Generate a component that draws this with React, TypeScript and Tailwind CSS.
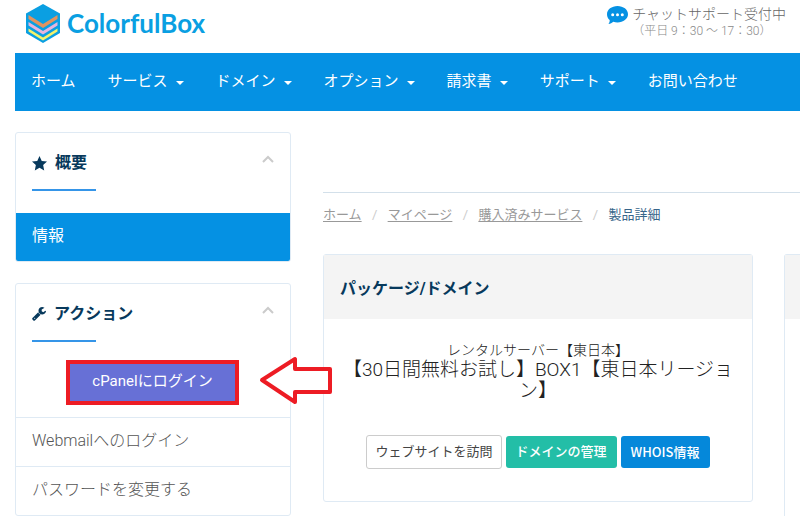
import React from "react";

const navItems = [
  { label: "ホーム", menu: false },
  { label: "サービス", menu: true },
  { label: "ドメイン", menu: true },
  { label: "オプション", menu: true },
  { label: "請求書", menu: true },
  { label: "サポート", menu: true },
  { label: "お問い合わせ", menu: false },
];

const crumbs = ["ホーム", "マイページ", "購入済みサービス"];

function LogoMark() {
  return (
    <svg viewBox="0 0 34 39" className="h-[39px] w-[34px]" aria-hidden="true">
      <path d="M17 0 34 9.500V29L17 39 0 29V9.500Z" fill="#0a9fe2" />
      <path d="M2.500 11 17 20 31.500 11V15L17 24 2.500 15Z" fill="#e2935f" />
      <path d="M2.500 18 17 27 31.500 18V21.500L17 30.500 2.500 21.500Z" fill="#e6b5dd" />
      <path d="M2.500 24.500 17 33.500 31.500 24.500V27.500L17 36.500 2.500 27.500Z" fill="#f4f36a" />
    </svg>
  );
}

function ChatIcon() {
  return (
    <svg viewBox="0 0 21 18" className="mt-1.5 h-[18px] w-[21px]" aria-hidden="true">
      <path d="M10.500 0C16.300 0 21 3.600 21 8.200s-4.700 8.200-10.500 8.200c-1.500 0-2.900-.2-4.200-.7C5 16.900 3.400 17.700 1.500 18c.8-1.100 1.300-2.300 1.200-3.900C1 12.600 0 10.500 0 8.200 0 3.600 4.700 0 10.500 0Z" fill="#0591e3" />
      <circle cx="5.700" cy="8.700" r="1.500" fill="#fff" />
      <circle cx="10.500" cy="8.700" r="1.500" fill="#fff" />
      <circle cx="15.300" cy="8.700" r="1.500" fill="#fff" />
    </svg>
  );
}

function StarIcon() {
  return (
    <svg viewBox="0 0 14 14" className="size-[15px]" fill="#07395c" aria-hidden="true">
      <path d="m7 0 2.100 4.600 4.900.5-3.600 3.400 1 5L7 11l-4.400 2.500 1-5L0 5.100l4.900-.5Z" />
    </svg>
  );
}

function WrenchIcon() {
  return (
    <svg viewBox="0 0 1664 1664" className="size-3.5" fill="#07395c" aria-hidden="true">
      <path d="M384 1344q0-26-19-45t-45-19-45 19-19 45 19 45 45 19 45-19 19-45zm644-420-682 682q-37 37-90 37-52 0-91-37L59 1498q-38-36-38-90 0-53 38-91l681-681q39 98 114.500 173.500T1028 924zm634-435q0 39-23 106-47 134-164.500 217.500T1216 896q-185 0-316.500-131.500T768 448t131.500-316.500T1216 0q58 0 121.500 16.500T1445 63q16 11 16 28t-16 28l-293 169v224l193 107q5-3 79-48.500t135.500-81T1630 454q15 0 23.500 10t8.500 25z" />
    </svg>
  );
}

function PanelHeader({ icon, title }: { icon: React.ReactNode; title: string }) {
  return (
    <div className="px-4 pt-4">
      <div className="flex h-7 items-center">
        {icon}
        <h2 className="ml-2 text-base font-bold text-[#07395c]">{title}</h2>
        <button type="button" aria-label={`${title}を閉じる`} className="ml-auto pb-2">
          <svg viewBox="0 0 12 8" className="h-2 w-3" fill="none" stroke="#cbcbcb" strokeWidth="2" aria-hidden="true">
            <path d="m1 7 5-5 5 5" />
          </svg>
        </button>
      </div>
      <div className="mt-3 h-0.5 w-16 bg-[#3595e8]" />
    </div>
  );
}

export default function App() {
  return (
    <div className="min-h-screen overflow-hidden bg-white font-['Roboto','Noto_Sans_CJK_JP',sans-serif]">
      <header className="flex h-[53px] items-start pl-[26px] pr-[14px]">
        <a href="#" className="flex items-center gap-[7px] pt-[3px] text-[#0a9fe2]">
          <LogoMark />
          <span className="font-['Lato',sans-serif] text-[26px] leading-10 font-bold">ColorfulBox</span>
        </a>
        <div className="ml-auto flex gap-1">
          <ChatIcon />
          <div className="pt-1.5 whitespace-nowrap">
            <p className="text-sm leading-4 font-light text-[#666]">チャットサポート受付中</p>
            <p className="text-xs leading-[18px] font-light text-[#888]">（平日 9：30 ～ 17：30）</p>
          </div>
        </div>
      </header>

      <nav className="ml-[15px] flex h-[58px] items-center gap-8 bg-[#0591e3] px-4 text-[15px] whitespace-nowrap text-white">
        {navItems.map((item) => (
          <a key={item.label} href="#" className="flex items-center gap-2 pb-0.5">
            {item.label}
            {item.menu && (
              <svg viewBox="0 0 8 4" className="mt-1 h-1 w-2" fill="currentColor" aria-hidden="true">
                <path d="M0 0h8L4 4Z" />
              </svg>
            )}
          </a>
        ))}
      </nav>

      <div className="flex gap-8 pt-[21px] pl-[15px]">
        <aside className="w-[276px] shrink-0">
          <section className="overflow-hidden rounded-[3px] border border-[#dfeaf4]">
            <PanelHeader icon={<StarIcon />} title="概要" />
            <a href="#" className="mt-[22px] flex h-12 items-center bg-[#0591e3] px-4 pb-0.5 text-base text-white">情報</a>
          </section>

          <section className="mt-[21px] rounded-[3px] border border-[#dfeaf4]">
            <PanelHeader icon={<WrenchIcon />} title="アクション" />
            <div className="relative mt-[18px] pl-[50px]">
              <button type="button" className="h-[45px] w-[173px] border-4 border-[#ed1c24] bg-[#6770d6] pb-0.5 text-[15px] text-white">
                cPanelにログイン
              </button>
              <svg viewBox="0 0 74 50" className="absolute -top-1 left-[243px] h-[50px] w-[74px]" aria-hidden="true">
                <path d="M3 24 36 3V13H71V36H36V46Z" fill="#fff" stroke="#ed1c24" strokeWidth="4" strokeLinejoin="round" />
              </svg>
            </div>
            <a href="#" className="mt-3 flex h-[49px] items-center border-t border-[#dfeaf4] px-4 pb-0.5 text-base font-light text-[#555]">Webmailへのログイン</a>
            <a href="#" className="flex h-[49px] items-center border-t border-[#dfeaf4] px-4 pb-0.5 text-base font-light text-[#555]">パスワードを変更する</a>
          </section>
        </aside>

        <main className="min-w-0 flex-1 pt-[60px]">
          <nav aria-label="パンくず" className="border-t border-[#d3e0ea] pt-3">
            <ol className="flex text-[13px] leading-5 whitespace-nowrap text-[#999]">
              {crumbs.map((crumb) => (
                <li key={crumb} className="flex">
                  <a href="#" className="underline underline-offset-2">{crumb}</a>
                  <span className="w-[26px] text-center text-[#ccc]">/</span>
                </li>
              ))}
              <li className="text-[#37658a]">製品詳細</li>
            </ol>
          </nav>

          <div className="mt-[29px] grid grid-cols-[430px_430px] items-start gap-[31px]">
            <section className="rounded-[3px] border border-[#dfeaf4]">
              <h2 className="flex h-16 items-center bg-[#f4f4f4] px-4 pt-1 text-base font-bold text-[#07395c]">パッケージ/ドメイン</h2>
              <div className="px-4 pt-[22px] pb-8 text-center text-[#222]">
                <p className="text-sm leading-[18px] font-light">レンタルサーバー【東日本】</p>
                <h3 className="text-[19px] leading-[21px] font-light">【30日間無料お試し】BOX1【東日本リージョン】</h3>
                <div className="mt-[34px] flex items-center justify-center gap-1 text-[13px]">
                  <button type="button" className="h-[34px] rounded-[3px] border border-[#ccc] px-2 text-[#444]">ウェブサイトを訪問</button>
                  <button type="button" className="h-8 rounded-[3px] bg-[#23bea7] px-2.5 font-medium text-white">ドメインの管理</button>
                  <button type="button" className="h-8 rounded-[3px] bg-[#0588da] px-2.5 font-['Noto_Sans_CJK_JP',sans-serif] font-medium text-white">WHOIS情報</button>
                </div>
              </div>
            </section>
            <section className="h-[262px] rounded-t-[3px] border border-b-0 border-[#dfeaf4]">
              <div className="h-16 bg-[#f4f4f4]" />
            </section>
          </div>
        </main>
      </div>
    </div>
  );
}
